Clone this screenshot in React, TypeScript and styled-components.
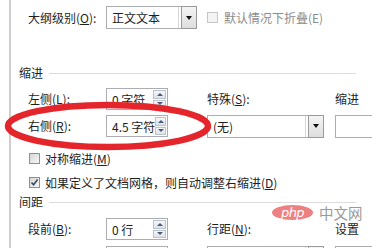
import styled, { createGlobalStyle } from 'styled-components'

const GlobalStyle = createGlobalStyle`
  html, body { margin: 0; padding: 0; background: #fff; }
  body {
    font-family: "Noto Sans CJK SC", "Microsoft YaHei", sans-serif;
    font-size: 12px;
    color: #1e1e1e;
    overflow: hidden;
    text-autospace: no-autospace;
    text-spacing-trim: space-all;
  }
`

const Page = styled.div`
  position: relative;
  width: 372px;
  height: 248px;
  overflow: hidden;
  display: flex;
`

const Rail = styled.div`
  width: 9px;
  flex: none;
  border-right: 2px solid #cfcfcf;
`

const Content = styled.div`
  flex: 1;
  min-width: 0;
  padding: 6px 16px 0 8px;
  display: flex;
  flex-direction: column;
`

const TopRow = styled.div`
  display: flex;
  align-items: center;
  height: 23px;
  padding-left: 9px;
`

const Label = styled.span<{ $w?: number }>`
  ${p => (p.$w ? `width: ${p.$w}px;` : '')}
  flex: none;
  white-space: nowrap;
  line-height: 16px;
`

const Select = styled.div<{ $w: number }>`
  width: ${p => p.$w}px;
  height: 23px;
  box-sizing: border-box;
  display: flex;
  align-items: stretch;
  border: 1px solid #abadb3;
  border-right: none;
  background: #fff;
`

const Value = styled.span`
  flex: 1;
  display: flex;
  align-items: center;
  padding-left: 5px;
  white-space: nowrap;
  border-right: 1px solid #d6d6d6;
`

const DropButton = styled.span`
  width: 16px;
  margin-left: 2px;
  box-sizing: border-box;
  border: 1px solid #9a9a9a;
  margin-top: -1px;
  margin-bottom: -1px;
  background: linear-gradient(#f4f4f4, #dedede);
  display: flex;
  align-items: center;
  justify-content: center;

  &::after {
    content: '';
    border-left: 3px solid transparent;
    border-right: 3px solid transparent;
    border-top: 4px solid #111;
  }
`

const Spin = styled.div`
  width: 62px;
  height: 22px;
  box-sizing: border-box;
  display: flex;
  border: 1px solid #abadb3;
  background: #fff;
`

const SpinValue = styled.span`
  flex: 1;
  display: flex;
  align-items: center;
  padding-left: 5px;
  white-space: nowrap;
`

const Spinner = styled.span`
  width: 13px;
  display: flex;
  flex-direction: column;
  gap: 1px;
  padding: 1px 1px 1px 0;
`

const SpinHalf = styled.span<{ $down?: boolean }>`
  flex: 1;
  box-sizing: border-box;
  border: 1px solid #b9c2cd;
  background: linear-gradient(#f5f7fa, #dde3ea);
  display: flex;
  align-items: center;
  justify-content: center;

  &::after {
    content: '';
    border-left: 3px solid transparent;
    border-right: 3px solid transparent;
    ${p => (p.$down ? 'border-top: 3px solid #4a5a78;' : 'border-bottom: 3px solid #4a5a78;')}
  }
`

const BlankBox = styled.div`
  width: 50px;
  height: 23px;
  box-sizing: border-box;
  border: 1px solid #abadb3;
  border-right: none;
  background: #fff;
`

const Section = styled.div<{ $mt: number }>`
  display: flex;
  align-items: center;
  gap: 6px;
  line-height: 16px;
  margin-top: ${p => p.$mt}px;

  &::after {
    content: '';
    flex: 1;
    height: 1px;
    background: #dcdcdc;
  }
`

const FieldGrid = styled.div<{ $mt: number }>`
  display: grid;
  grid-template-columns: 78px 101px 128px 1fr;
  grid-auto-rows: 22px;
  row-gap: ${p => (p.$mt > 7 ? 6 : 5)}px;
  align-items: center;
  padding-left: 9px;
  margin-top: ${p => p.$mt}px;
`

const CheckRow = styled.div<{ $mt?: number; $disabled?: boolean }>`
  display: flex;
  align-items: center;
  gap: ${p => (p.$disabled ? 6 : 5)}px;
  height: 16px;
  padding-left: ${p => (p.$disabled ? 0 : 10)}px;
  margin-left: ${p => (p.$disabled ? 10 : 0)}px;
  margin-top: ${p => p.$mt ?? 0}px;
  white-space: nowrap;
  color: ${p => (p.$disabled ? '#8c8c8c' : 'inherit')};
`

const Box = styled.span<{ $disabled?: boolean }>`
  width: 11px;
  height: 11px;
  flex: none;
  box-sizing: border-box;
  border: 1px solid ${p => (p.$disabled ? '#c6c6c6' : '#8e8f8f')};
  background: ${p =>
    p.$disabled ? '#f4f4f4' : 'linear-gradient(135deg, #d6d6d6, #f7f7f7)'};
  display: flex;
  align-items: center;
  justify-content: center;
`

const Ring = styled.svg`
  position: absolute;
  left: 0;
  top: 0;
  pointer-events: none;
`

const Watermark = styled.div`
  position: absolute;
  left: 272px;
  top: 205px;
  display: flex;
  align-items: center;
  gap: 6px;
`

const PhpBadge = styled.span`
  width: 41px;
  height: 15px;
  border-radius: 50%;
  background: rgba(232, 92, 92, 0.78);
  color: #fff;
  font-family: "DejaVu Sans", sans-serif;
  font-style: italic;
  font-size: 13px;
  line-height: 15px;
  text-align: center;
  letter-spacing: -0.5px;
`

const SiteName = styled.span`
  font-size: 14.5px;
  line-height: 15px;
  color: #9a9a9a;
`

function Check() {
  return (
    <svg width="9" height="9" viewBox="0 0 9 9">
      <path d="M1.5 4.5 L3.6 6.8 L7.6 1.6" fill="none" stroke="#3b4a60" strokeWidth="1.6" />
    </svg>
  )
}

function SpinBox({ value }: { value: string }) {
  return (
    <Spin>
      <SpinValue>{value}</SpinValue>
      <Spinner>
        <SpinHalf />
        <SpinHalf $down />
      </Spinner>
    </Spin>
  )
}

function Dropdown({ value, w }: { value: string; w: number }) {
  return (
    <Select $w={w}>
      <Value>{value}</Value>
      <DropButton />
    </Select>
  )
}

export default function App() {
  return (
    <Page>
      <GlobalStyle />
      <Rail />
      <Content>
        <TopRow>
          <Label $w={78}>大纲级别(<u>O</u>):</Label>
          <Dropdown value="正文文本" w={91} />
          <CheckRow $disabled>
            <Box $disabled />
            <span>默认情况下折叠(E)</span>
          </CheckRow>
        </TopRow>

        <Section $mt={36}>缩进</Section>
        <FieldGrid $mt={7}>
          <Label>左侧(<u>L</u>):</Label>
          <SpinBox value="0 字符" />
          <Label>特殊(<u>S</u>):</Label>
          <Label>缩进</Label>

          <Label>右侧(<u>R</u>):</Label>
          <SpinBox value="4.5 字符" />
          <Dropdown value="(无)" w={117} />
          <BlankBox />
        </FieldGrid>

        <CheckRow $mt={13}>
          <Box />
          <span>对称缩进(<u>M</u>)</span>
        </CheckRow>
        <CheckRow $mt={8}>
          <Box>
            <Check />
          </Box>
          <span>如果定义了文档网格，则自动调整右缩进(<u>D</u>)</span>
        </CheckRow>

        <Section $mt={4}>间距</Section>
        <FieldGrid $mt={8}>
          <Label>段前(<u>B</u>):</Label>
          <SpinBox value="0 行" />
          <Label>行距(<u>N</u>):</Label>
          <Label>设置</Label>

          <Label />
          <SpinBox value="" />
          <Dropdown value="" w={117} />
          <BlankBox />
        </FieldGrid>
      </Content>

      <Ring width="372" height="248" viewBox="0 0 372 248">
        <ellipse cx="108" cy="126" rx="100" ry="21" fill="none" stroke="#e4262c" strokeWidth="6.5" />
      </Ring>

      <Watermark>
        <PhpBadge>php</PhpBadge>
        <SiteName>中文网</SiteName>
      </Watermark>
    </Page>
  )
}
